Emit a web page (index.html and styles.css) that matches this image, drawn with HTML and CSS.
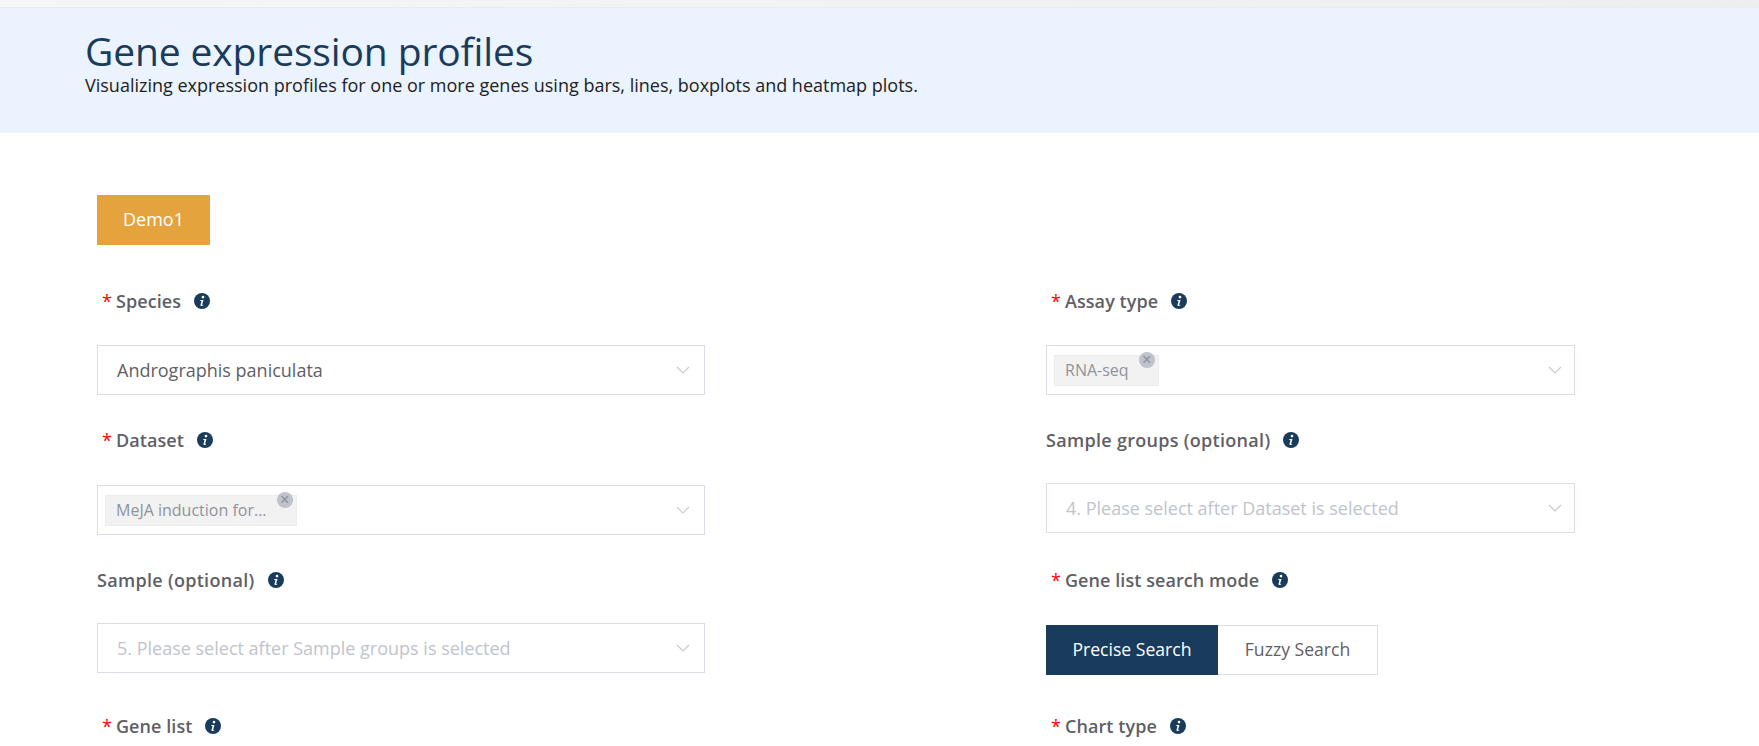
FILE: index.html
```html
<!DOCTYPE html>
<html lang="en">
<head>
<meta charset="utf-8">
<title>Gene expression profiles</title>
<link rel="stylesheet" href="styles.css">
</head>
<body>
<svg class="sprites" width="0" height="0" aria-hidden="true">
  <symbol id="info" viewBox="0 0 16 16">
    <circle cx="8" cy="8" r="8" fill="#1a3c5c"/>
    <circle cx="9" cy="4.1" r="1.35" fill="#fff"/>
    <path d="M6.4 7h3.1l-1.3 4.6c-.1.4.3.5.9.1l.3.5c-1 .9-3.200 1.200-2.900-.3l1-3.800h-1.200z" fill="#fff"/>
  </symbol>
  <symbol id="chev" viewBox="0 0 14 8">
    <path d="M1 1l6 6 6-6" fill="none" stroke="#c8c9d4" stroke-width="1.200"/>
  </symbol>
</svg>
<div class="topbar"></div>
<header class="hero">
  <h1>Gene expression profiles</h1>
  <p>Visualizing expression profiles for one or more genes using bars, lines, boxplots and heatmap plots.</p>
</header>
<main class="content">
  <button class="demo" type="button">Demo1</button>
  <div class="form">
    <div class="col">
      <section class="field">
        <div class="label req"><span>Species</span><svg class="info"><use href="#info"/></svg></div>
        <div class="select"><span class="value">Andrographis paniculata</span><svg class="chev"><use href="#chev"/></svg></div>
      </section>
      <section class="field loose">
        <div class="label req"><span>Dataset</span><svg class="info"><use href="#info"/></svg></div>
        <div class="select"><span class="chip">MeJA induction for...<i class="close">×</i></span><svg class="chev"><use href="#chev"/></svg></div>
      </section>
      <section class="field tight tall">
        <div class="label opt"><span>Sample (optional)</span><svg class="info"><use href="#info"/></svg></div>
        <div class="select"><span class="placeholder">5. Please select after Sample groups is selected</span><svg class="chev"><use href="#chev"/></svg></div>
      </section>
      <section class="field">
        <div class="label req"><span>Gene list</span><svg class="info"><use href="#info"/></svg></div>
      </section>
    </div>
    <div class="col col-right">
      <section class="field">
        <div class="label req"><span>Assay type</span><svg class="info"><use href="#info"/></svg></div>
        <div class="select"><span class="chip">RNA-seq<i class="close">×</i></span><svg class="chev"><use href="#chev"/></svg></div>
      </section>
      <section class="field tight mid">
        <div class="label opt"><span>Sample groups (optional)</span><svg class="info"><use href="#info"/></svg></div>
        <div class="select"><span class="placeholder">4. Please select after Dataset is selected</span><svg class="chev"><use href="#chev"/></svg></div>
      </section>
      <section class="field short">
        <div class="label req"><span>Gene list search mode</span><svg class="info"><use href="#info"/></svg></div>
        <div class="toggle">
          <button class="seg on" type="button">Precise Search</button>
          <button class="seg" type="button">Fuzzy Search</button>
        </div>
      </section>
      <section class="field">
        <div class="label req"><span>Chart type</span><svg class="info"><use href="#info"/></svg></div>
      </section>
    </div>
  </div>
</main>
</body>
</html>
```
FILE: styles.css
```css
* { box-sizing: border-box; }
html, body { margin: 0; height: 746px; overflow: hidden; background: #fff; }
body { font-family: "Open Sans", "Noto Sans", sans-serif; color: #5f6065; }
.sprites { display: block; height: 0; }

.topbar { height: 8px; background: linear-gradient(90deg, #f6f6f6, #eeeeee); border-bottom: 1px solid #ececec; }
.hero { height: 125px; background: #ebf3fe; padding: 20px 0 0 85px; }
.hero h1 { margin: 0; font-size: 39px; line-height: 46px; font-weight: 400; color: #1a3c5c; letter-spacing: -.13px; }
.hero p { margin: 0; font-size: 18px; line-height: 22px; color: #222; }

.content { padding: 62px 0 0 97px; }
.demo { display: block; width: 113px; height: 50px; border: 0; padding: 0 0 3px; background: #e5a33e; color: #fff; font: 400 18px "Open Sans", sans-serif; }
.form { display: grid; grid-template-columns: 608px 529px; column-gap: 341px; margin-top: 41px; }

.field { padding-bottom: 30px; }
.field.tall { padding-bottom: 38px; }
.field.mid { padding-bottom: 32px; }
.field.short { padding-bottom: 36px; }

.label { display: flex; align-items: center; height: 30px; margin-bottom: 29px; font-size: 18px; font-weight: 600; color: #5f6065; letter-spacing: .07px; }
.label.opt { letter-spacing: .3px; }
.tight .label { margin-bottom: 28px; }
.short .label, .loose .label { margin-bottom: 30px; }
.label.req { padding-left: 5px; }
.label.req::before { content: "*"; color: #f00; margin-right: 4px; font-weight: 400; }
.info { width: 16px; height: 16px; margin-left: 13px; flex: none; }

.select { display: flex; align-items: center; justify-content: space-between; height: 50px; border: 1px solid #dcdde6; padding: 0 14px 0 19px; font-size: 18px; }
.col-right .select { padding-right: 12px; }
.value { color: #5f6065; }
.placeholder { color: #c0c4cc; }
.chev { width: 14px; height: 8px; flex: none; }

.select:has(.chip) { padding-left: 7px; }
.chip { position: relative; display: block; height: 31px; line-height: 29px; padding: 0 29px 0 10px; background: #f2f2f2; border: 1px solid #ececec; color: #90939c; font-size: 16px; }
.close { position: absolute; top: -4px; right: 3px; width: 16px; height: 16px; border-radius: 50%; background: #c0c2cc; color: #8b8d97; font: 400 16px/15px "Liberation Sans", sans-serif; text-align: center; }

.toggle { display: flex; height: 50px; }
.seg { height: 50px; padding: 0 0 3px; border: 1px solid #dcdde6; border-left: 0; background: #fff; color: #5f6065; font: 400 17.6px "Open Sans", sans-serif; width: 160px; }
.seg.on { width: 172px; background: #1a3c5c; border: 0; color: #fff; }
```
